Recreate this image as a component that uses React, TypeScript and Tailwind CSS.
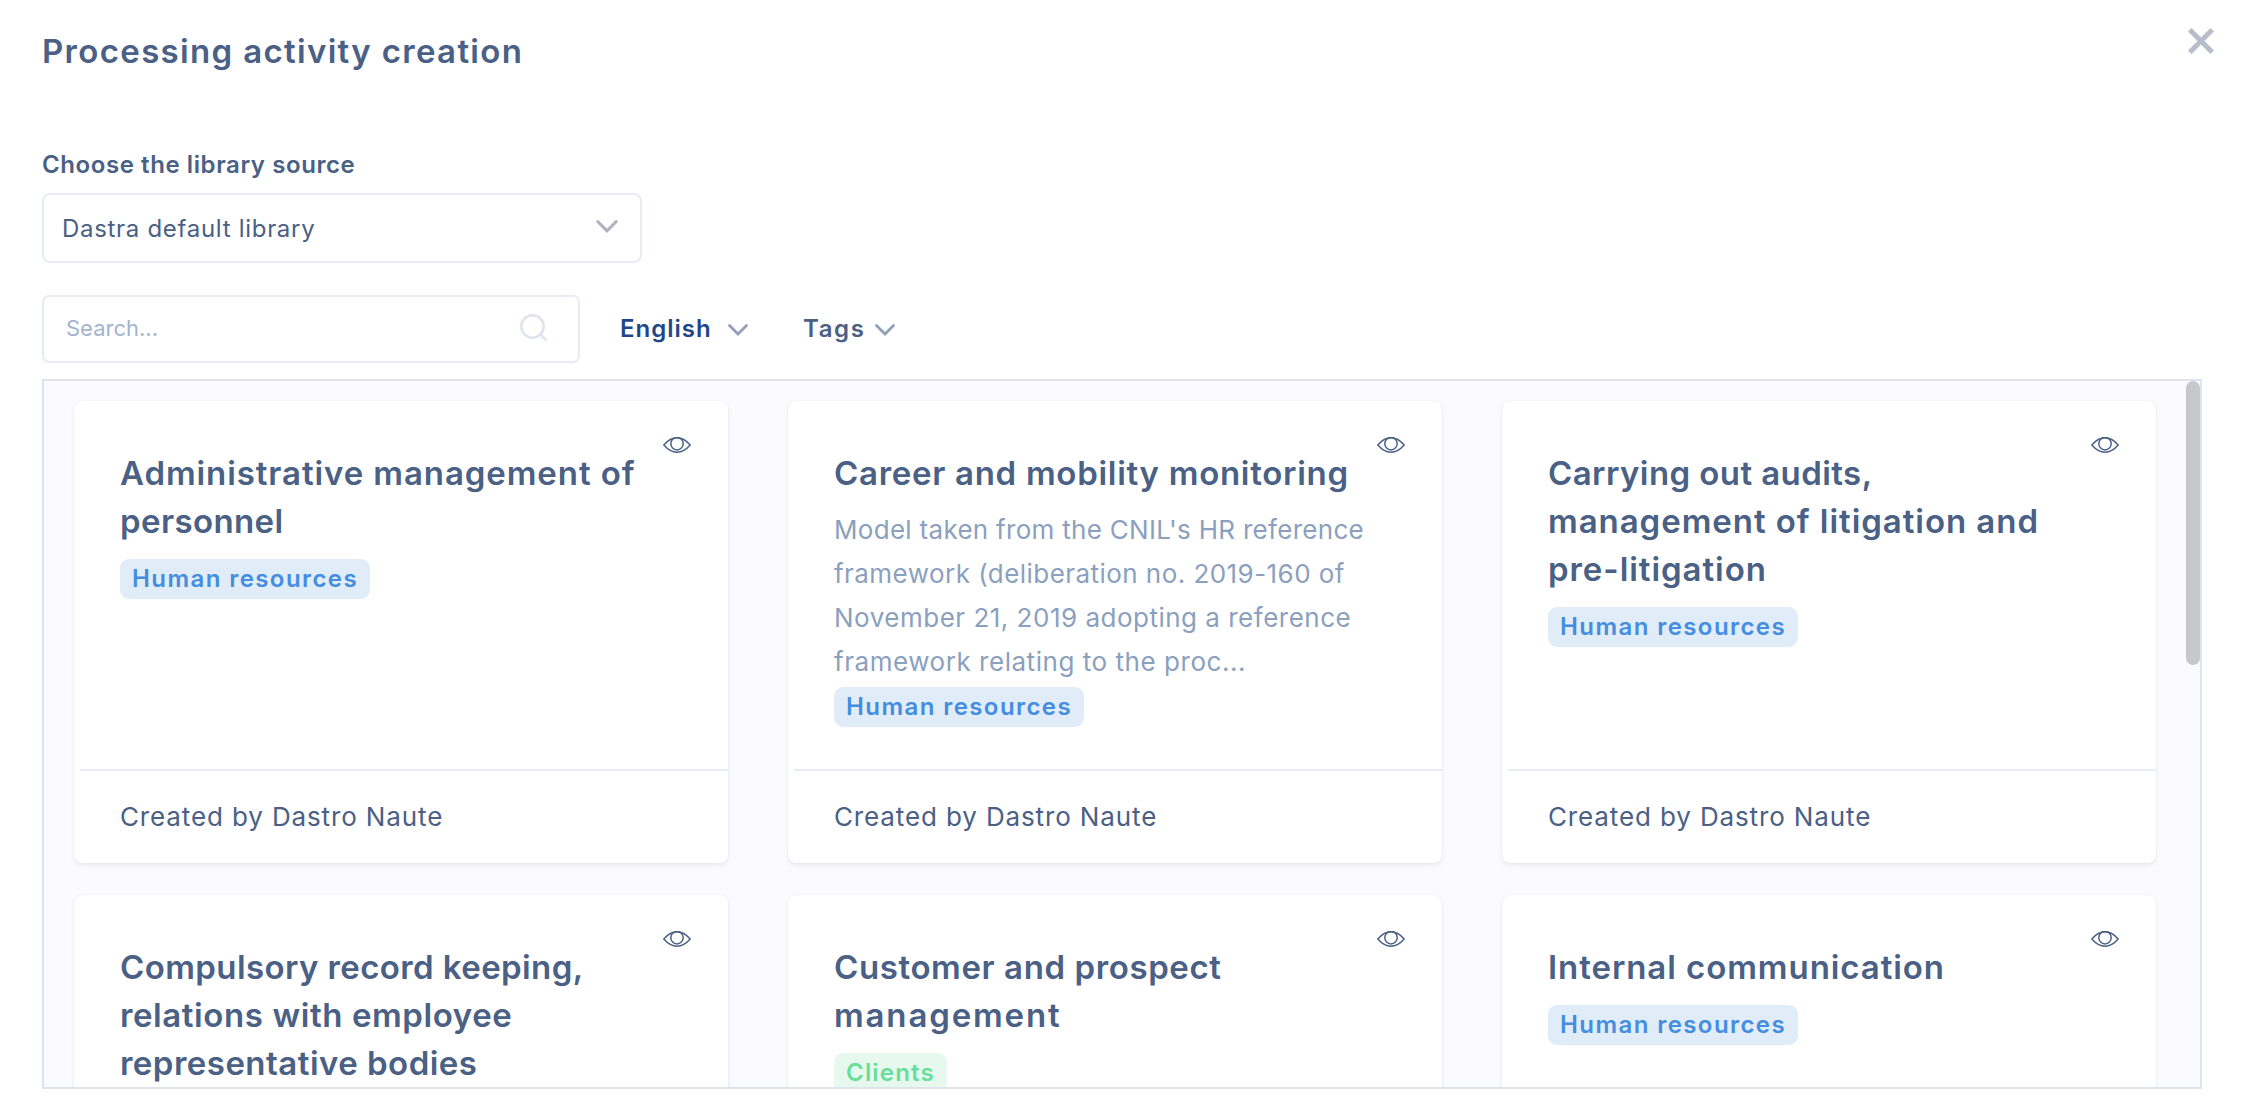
import React from "react";

type Line = { text: string; tracking: string };
type Activity = {
  title: Line[];
  description?: Line[];
  tag?: "hr" | "clients";
  author?: string;
};

const activities: Activity[] = [
  {
    title: [
      { text: "Administrative management of", tracking: "tracking-[0.91px]" },
      { text: "personnel", tracking: "tracking-[0.4px]" },
    ],
    tag: "hr",
    author: "Dastro Naute",
  },
  {
    title: [{ text: "Career and mobility monitoring", tracking: "tracking-[0.71px]" }],
    description: [
      { text: "Model taken from the CNIL's HR reference", tracking: "tracking-[0.3px]" },
      { text: "framework (deliberation no. 2019-160 of", tracking: "tracking-[0.45px]" },
      { text: "November 21, 2019 adopting a reference", tracking: "tracking-[0.5px]" },
      { text: "framework relating to the proc...", tracking: "tracking-[0.54px]" },
    ],
    tag: "hr",
    author: "Dastro Naute",
  },
  {
    title: [
      { text: "Carrying out audits,", tracking: "tracking-[0.42px]" },
      { text: "management of litigation and", tracking: "tracking-[0.95px]" },
      { text: "pre-litigation", tracking: "tracking-[0.95px]" },
    ],
    tag: "hr",
    author: "Dastro Naute",
  },
  {
    title: [
      { text: "Compulsory record keeping,", tracking: "tracking-[0.4px]" },
      { text: "relations with employee", tracking: "tracking-[0.59px]" },
      { text: "representative bodies", tracking: "tracking-[0.48px]" },
    ],
  },
  {
    title: [
      { text: "Customer and prospect", tracking: "tracking-[0.6px]" },
      { text: "management", tracking: "tracking-[1.85px]" },
    ],
    tag: "clients",
  },
  {
    title: [{ text: "Internal communication", tracking: "tracking-[0.93px]" }],
    tag: "hr",
  },
];

function Chevron({ className }: { className: string }) {
  return (
    <svg className={className} viewBox="0 0 20 12" fill="none" stroke="currentColor" strokeWidth="2.7" strokeLinecap="round">
      <path d="M1.500 1.500 10 10l8.500-8.500" />
    </svg>
  );
}

function Eye() {
  return (
    <svg className="h-4 w-7" viewBox="0 0 28 16" fill="none" stroke="currentColor" strokeWidth="1.5" strokeLinejoin="round">
      <path d="M.8 8C5 3.200 9 .8 14 .8S23 3.200 27.200 8C23 12.800 19 15.200 14 15.200S5 12.800 .8 8Z" />
      <circle cx="14" cy="6.700" r="6.200" />
    </svg>
  );
}

function Tag({ kind }: { kind: "hr" | "clients" }) {
  return kind === "hr" ? (
    <div className="flex h-10 w-[250px] items-center rounded-[9px] bg-[#e1ecf9] pl-3 text-[24px] font-semibold tracking-[1.42px] text-[#448de0]">
      Human resources
    </div>
  ) : (
    <div className="flex h-10 w-[113px] items-center rounded-[9px] bg-[#e7f9ef] pl-3 text-[24px] font-semibold tracking-[1.2px] text-[#68df98]">
      Clients
    </div>
  );
}

function Card({ activity }: { activity: Activity }) {
  return (
    <article className="relative flex h-[462px] flex-col rounded-[8px] bg-white shadow-[0_0_2px_rgba(40,50,80,0.10),0_3px_5px_rgba(40,50,80,0.07)]">
      <div className="flex-1 pt-12 pl-[46px] whitespace-nowrap">
        <button className="absolute top-9 right-[37px] block" aria-label="Preview">
          <Eye />
        </button>
        <h2 className="text-[33px] leading-[48px] font-semibold">
          {activity.title.map((line) => (
            <span key={line.text} className={"block " + line.tracking}>{line.text}</span>
          ))}
        </h2>
        {activity.description && (
          <p className="mt-[11px] -mb-[11px] text-[26px] leading-[44px] text-[#8b9fbe]">
            {activity.description.map((line) => (
              <span key={line.text} className={"block " + line.tracking}>{line.text}</span>
            ))}
          </p>
        )}
        {activity.tag && (
          <div className="mt-[14px]">
            <Tag kind={activity.tag} />
          </div>
        )}
      </div>
      {activity.author && (
        <footer className="ml-1.5 flex h-[94px] items-center border-t-2 border-[#e6ebf5] pb-0.5 pl-10 text-[26px] tracking-[0.87px]">
          Created by {activity.author}
        </footer>
      )}
    </article>
  );
}

export default function App() {
  return (
    <main className="h-[1112px] w-[2255px] overflow-hidden bg-white pt-[27px] pl-[42px] font-['Inter',sans-serif] text-[#4a6085]">
      <header className="flex h-[120px] items-start justify-between pr-[41px]">
        <h1 className="text-[33px] leading-[48px] font-semibold tracking-[1.33px]">Processing activity creation</h1>
        <button aria-label="Close" className="mt-px text-[#b8bdca]">
          <svg className="block size-[26px]" viewBox="0 0 26 26" fill="none" stroke="currentColor" strokeWidth="5">
            <path d="m1.800 1.800 22.400 22.400M24.200 1.800 1.800 24.200" />
          </svg>
        </button>
      </header>

      <label className="block text-[24px] leading-9 font-semibold tracking-[0.58px]">Choose the library source</label>
      <div className="mt-[10px] flex h-[70px] w-[600px] items-center justify-between rounded-[8px] border-2 border-[#e6ebf5] pr-[22px] pl-[18px] text-[24px] tracking-[0.7px]">
        <span className="mt-0.5">Dastra default library</span>
        <Chevron className="-mt-1 h-[13px] w-[22px] text-[#adb4c0]" />
      </div>

      <div className="mt-8 flex h-[68px] items-center text-[24px] font-semibold">
        <div className="flex h-[68px] w-[538px] items-center justify-between rounded-[7px] border-2 border-[#e6ebf5] pr-[30px] pl-[22px] text-[22px] font-normal text-[#a3b4ce]">
          <span className="-mt-0.5">Search...</span>
          <svg className="-mt-0.5 size-7 text-[#dfe3eb]" viewBox="0 0 28 28" fill="none" stroke="currentColor" strokeWidth="2.500" strokeLinecap="round">
            <circle cx="12.500" cy="12.500" r="11.200" />
            <path d="m20.500 20.500 5.500 5.500" />
          </svg>
        </div>
        <button className="ml-10 flex items-center gap-[18px] text-[#1f4788]">
          <span className="w-[90px] text-left tracking-[1px]">English</span>
          <Chevron className="mt-0.5 h-3 w-5 text-[#8f9fb8]" />
        </button>
        <button className="ml-[55px] flex items-center gap-[10px]">
          <span className="w-[62px] text-left tracking-[1.6px]">Tags</span>
          <Chevron className="mt-0.5 h-3 w-5 text-[#8f9fb8]" />
        </button>
      </div>

      <section className="relative mt-4 h-[710px] w-[2160px] overflow-hidden border-2 border-[#dfe3eb] bg-[#fbfbff]">
        <div className="grid grid-cols-[654px_654px_654px] gap-x-[60px] gap-y-8 pt-5 pl-[30px]">
          {activities.map((activity) => (
            <Card key={activity.title[0].text} activity={activity} />
          ))}
        </div>
        <div className="absolute top-0 right-0 h-[284px] w-[14px] rounded-full bg-[#c8c8ca]" />
      </section>
    </main>
  );
}
